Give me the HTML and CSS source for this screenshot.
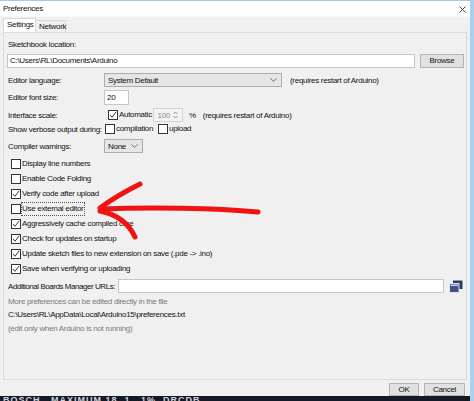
FILE: index.html
```html
<!DOCTYPE html>
<html>
<head>
<meta charset="utf-8">
<title>Preferences</title>
<link rel="stylesheet" href="styles.css">
</head>
<body>
<div class="window">
  <div class="titlebar">
    <span class="title">Preferences</span>
    <svg class="close" width="7" height="7" viewBox="0 0 7 7"><path d="M0.5 0.5 L6.5 6.5 M6.5 0.5 L0.5 6.5" stroke="#333" stroke-width="0.9" fill="none"/></svg>
  </div>
  <div class="tabs">
    <div class="tab active">Settings</div>
    <div class="tab net">Network</div>
  </div>
  <div class="panel">
    <div class="line sk">Sketchbook location:</div>
    <div class="loc">
      <div class="input grow">C:\Users\RL\Documents\Arduino</div>
      <div class="btn browse">Browse</div>
    </div>

    <div class="frow r-lang">
      <div class="flabel">Editor language:</div>
      <div class="select lang"><span>System Default</span><svg class="chev" width="7" height="4" viewBox="0 0 7 4"><path d="M0.5 0.5 L3.5 3.3 L6.5 0.5" stroke="#555" stroke-width="0.8" fill="none"/></svg></div>
      <span class="note">(requires restart of Arduino)</span>
    </div>

    <div class="frow r-font">
      <div class="flabel">Editor font size:</div>
      <div class="input fontsize">20</div>
    </div>

    <div class="frow r-scale">
      <div class="flabel">Interface scale:</div>
      <span class="cb cb-auto"><svg width="8" height="8" viewBox="0 0 8 8"><path d="M1 4 L3 6.3 L7.2 0.8" stroke="#222" stroke-width="0.9" fill="none"/></svg></span>
      <span class="cbl auto">Automatic</span>
      <div class="spin"><span class="spinval">100</span><svg width="5" height="8" viewBox="0 0 5 8"><path d="M0.5 3 L2.5 1 L4.5 3 M0.5 5 L2.5 7 L4.5 5" stroke="#777" stroke-width="0.8" fill="none"/></svg></div>
      <span class="pct">%</span>
      <span class="note2">(requires restart of Arduino)</span>
    </div>

    <div class="frow r-verbose">
      <div class="flabel">Show verbose output during:</div>
      <span class="cb cb-v1"></span>
      <span class="cbl comp">compilation</span>
      <span class="cb cb-v2"></span>
      <span class="cbl">upload</span>
    </div>

    <div class="frow r-warn">
      <div class="flabel">Compiler warnings:</div>
      <div class="select warn"><span>None</span><svg class="chev" width="7" height="4" viewBox="0 0 7 4"><path d="M0.5 0.5 L3.5 3.3 L6.5 0.5" stroke="#555" stroke-width="0.8" fill="none"/></svg></div>
    </div>

    <div class="checks">
      <div class="cbrow"><span class="cb"></span><span class="cbl">Display line numbers</span></div>
      <div class="cbrow"><span class="cb"></span><span class="cbl">Enable Code Folding</span></div>
      <div class="cbrow"><span class="cb"><svg width="8" height="8" viewBox="0 0 8 8"><path d="M1 4 L3 6.3 L7.2 0.8" stroke="#222" stroke-width="0.9" fill="none"/></svg></span><span class="cbl">Verify code after upload</span></div>
      <div class="cbrow"><span class="cb"></span><span class="cbl focus">Use external editor</span></div>
      <div class="cbrow"><span class="cb"><svg width="8" height="8" viewBox="0 0 8 8"><path d="M1 4 L3 6.3 L7.2 0.8" stroke="#222" stroke-width="0.9" fill="none"/></svg></span><span class="cbl">Aggressively cache compiled core</span></div>
      <div class="cbrow"><span class="cb"><svg width="8" height="8" viewBox="0 0 8 8"><path d="M1 4 L3 6.3 L7.2 0.8" stroke="#222" stroke-width="0.9" fill="none"/></svg></span><span class="cbl">Check for updates on startup</span></div>
      <div class="cbrow"><span class="cb"><svg width="8" height="8" viewBox="0 0 8 8"><path d="M1 4 L3 6.3 L7.2 0.8" stroke="#222" stroke-width="0.9" fill="none"/></svg></span><span class="cbl">Update sketch files to new extension on save (.pde -&gt; .ino)</span></div>
      <div class="cbrow"><span class="cb"><svg width="8" height="8" viewBox="0 0 8 8"><path d="M1 4 L3 6.3 L7.2 0.8" stroke="#222" stroke-width="0.9" fill="none"/></svg></span><span class="cbl">Save when verifying or uploading</span></div>
    </div>

    <div class="frow r-urls">
      <div class="flabel urlabel">Additional Boards Manager URLs:</div>
      <div class="input urls"></div>
      <svg class="winicon" width="14" height="13" viewBox="0 0 14 13">
        <rect x="4" y="0.5" width="9.5" height="8.5" fill="#2c3a60"/>
        <rect x="0.5" y="3.5" width="9.5" height="9" fill="#3f5283" stroke="#dfe4ee" stroke-width="1"/>
        <rect x="1.5" y="4.5" width="7.5" height="1.5" fill="#c9d2e6"/>
      </svg>
    </div>

    <div class="line gray more">More preferences can be edited directly in the file</div>
    <div class="line path">C:\Users\RL\AppData\Local\Arduino15\preferences.txt</div>
    <div class="line gray edit">(edit only when Arduino is not running)</div>
  </div>
  <div class="footer">
    <div class="btn ok">OK</div>
    <div class="btn cancel">Cancel</div>
  </div>
  <div class="taskbar"><span>BOSCH&nbsp;&nbsp; MAXIMUM 18&nbsp; 1 . 1%&nbsp; DRCDB</span></div>

  <svg class="arrow" width="474" height="401" viewBox="0 0 474 401">
    <path d="M101 209 C 150 207, 215 208, 258 212" stroke="#f01313" stroke-width="5" fill="none" stroke-linecap="round"/>
    <path d="M140 184 C 126 191, 112 199, 100 208" stroke="#f01313" stroke-width="5" fill="none" stroke-linecap="round"/>
    <path d="M100 211 C 115 214, 128 222, 135 237" stroke="#f01313" stroke-width="5" fill="none" stroke-linecap="round"/>
  </svg>
</div>
</body>
</html>
```

FILE: styles.css
```css
* { box-sizing: border-box; }
html, body { margin: 0; padding: 0; }
body {
  width: 474px;
  height: 401px;
  overflow: hidden;
  background: #f0f0f0;
  font-family: "Liberation Sans", Arial, sans-serif;
  font-size: 8px;
  letter-spacing: -0.3px;
  color: #111;
}
.window {
  position: relative;
  width: 474px;
  height: 401px;
  border-top: 1px solid #9fcbee;
  border-right: 4px solid #a8d0f1;
  display: flex;
  flex-direction: column;
  background: #f0f0f0;
}
.titlebar {
  height: 16px;
  flex: none;
  background: #fff;
  border-bottom: 1px solid #fbf7ea;
  display: flex;
  align-items: center;
  justify-content: space-between;
  padding: 0 4px 0 3px;
}
.title { line-height: 12px; }
.close { display: block; margin-top: 2px; }

.tabs {
  height: 15px;
  flex: none;
  display: flex;
  align-items: flex-end;
  padding-left: 3px;
}
.tab {
  height: 12px;
  border: 1px solid #d9d9d9;
  border-bottom: none;
  line-height: 11px;
  padding-left: 3px;
  background: #f0f0f0;
}
.tab.active { width: 33px; height: 14px; background: #fff; line-height: 12px; }
.tab.net { width: 30px; border-left: none; }

.panel {
  flex: 1;
  margin: 0 3px;
  border: 1px solid #dadada;
  display: flex;
  flex-direction: column;
  padding: 0 2px 0 3px;
}
.line { height: 12px; line-height: 12px; padding-left: 1px; flex: none; }
.sk { margin-top: 6px; }
.loc { margin-top: 3px; height: 14px; display: flex; gap: 5px; flex: none; }
.input {
  background: #fff;
  border: 1px solid #c6c6c6;
  height: 14px;
  line-height: 12px;
  padding-left: 2px;
}
.grow { flex: 1; }
.btn {
  background: #e1e1e1;
  border: 1px solid #b4b4b4;
  text-align: center;
  line-height: 12px;
  height: 14px;
}
.browse { width: 44px; }

.frow { display: flex; align-items: center; height: 14px; flex: none; }
.flabel { width: 97px; padding-left: 1px; flex: none; white-space: nowrap; }
.select {
  height: 14px;
  background: #e6e6e6;
  border: 1px solid #adadad;
  display: flex;
  align-items: center;
  justify-content: space-between;
  padding: 0 4px 0 3px;
  flex: none;
}
.chev { display: block; }
.lang { width: 178px; }
.note { margin-left: 8px; }
.r-lang { margin-top: 5px; }

.r-font { margin-top: 3px; height: 15px; }
.fontsize { width: 25px; height: 15px; line-height: 13px; }

.r-scale { margin-top: 3px; }
.cb {
  width: 10px;
  height: 10px;
  border: 1px solid #333;
  background: #fff;
  flex: none;
  display: flex;
  align-items: center;
  justify-content: center;
}
.cb svg { display: block; }
.cbl { margin-left: 1px; white-space: nowrap; line-height: 12px; }
.cb-auto { margin-left: 4px; }
.auto { width: 32px; }
.spin {
  width: 30px;
  height: 14px;
  margin-left: 2px;
  border: 1px solid #d4d4d4;
  background: #f3f3f3;
  display: flex;
  align-items: center;
  justify-content: flex-end;
  padding-right: 4px;
  gap: 3px;
  color: #8a8a8a;
}
.spin svg { display: block; }
.pct { margin-left: 6px; }
.note2 { margin-left: 7px; }

.cb-v1 { margin-left: 1px; }
.comp { width: 37px; }
.cb-v2 { margin-left: 5px; }

.r-warn { margin-top: 3px; }
.warn { width: 39px; }

.checks { margin-top: 3px; display: flex; flex-direction: column; flex: none; }
.cbrow { height: 15px; display: flex; align-items: center; padding-left: 4px; }
.focus { outline: 1px dotted #555; outline-offset: 0; padding: 0 1px 0 0; }

.r-urls { margin-top: 3px; }
.urlabel { width: 111px; letter-spacing: -0.45px; }
.urls { width: 326px; }
.winicon { display: block; margin-left: 5px; }

.gray { color: #7a7a7a; }
.more { margin-top: 3px; }
.path { margin-top: 1px; }
.edit { margin-top: 2px; }

.footer {
  height: 16px;
  flex: none;
  display: flex;
  justify-content: flex-end;
  gap: 5px;
  padding: 3px 5px 0 0;
}
.footer .btn { height: 13px; line-height: 11px; }
.ok { width: 30px; }
.cancel { width: 41px; }

.taskbar {
  height: 5px;
  flex: none;
  background: #141925;
  overflow: hidden;
  color: #cfd4dc;
  font-weight: bold;
  font-size: 9px;
  line-height: 9px;
  letter-spacing: 1px;
  padding-left: 3px;
  white-space: pre;
}
.arrow {
  position: absolute;
  left: 0;
  top: -1px;
  pointer-events: none;
}
```
